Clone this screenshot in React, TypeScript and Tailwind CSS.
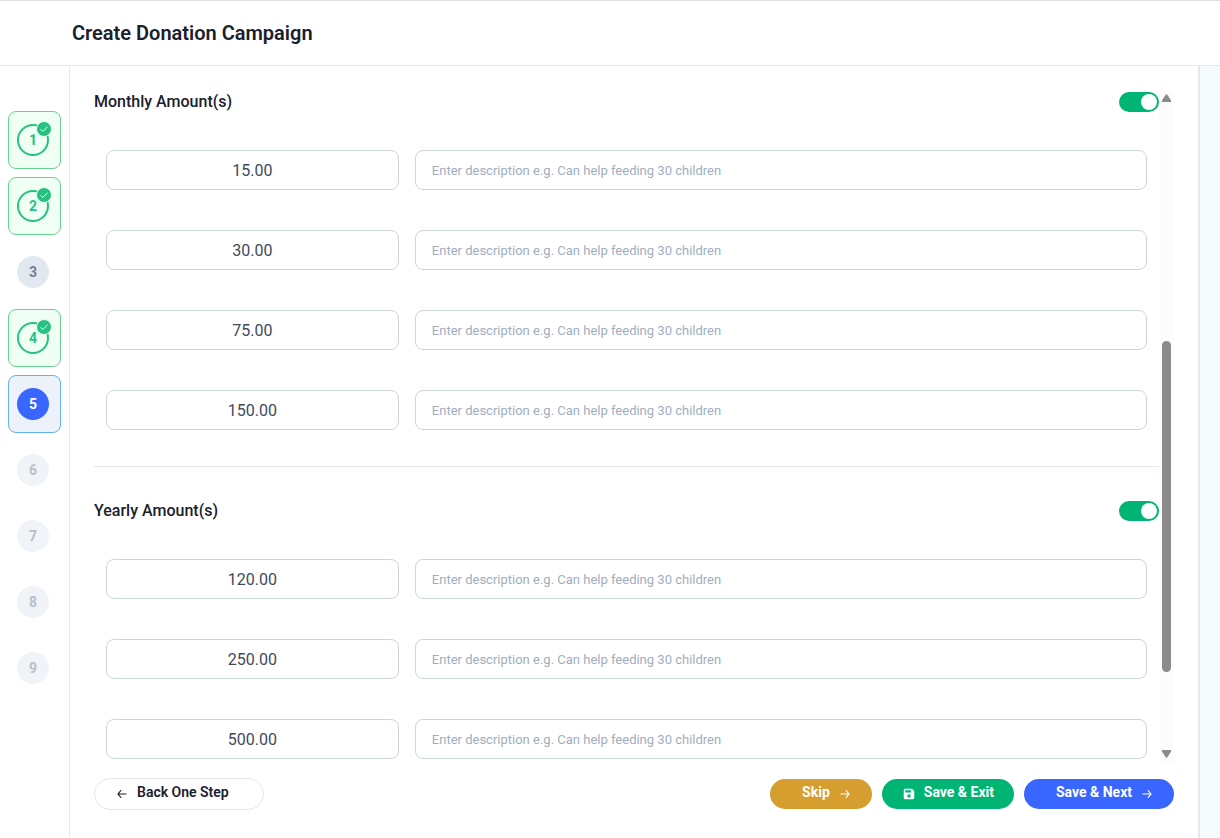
import { useState } from "react";
import type { ReactNode } from "react";
import clsx from "clsx";

type StepState = "done" | "current" | "open" | "disabled";

const steps: { id: number; state: StepState }[] = [
  { id: 1, state: "done" },
  { id: 2, state: "done" },
  { id: 3, state: "open" },
  { id: 4, state: "done" },
  { id: 5, state: "current" },
  { id: 6, state: "disabled" },
  { id: 7, state: "disabled" },
  { id: 8, state: "disabled" },
  { id: 9, state: "disabled" },
];

const monthlyAmounts = ["15.00", "30.00", "75.00", "150.00"];
const yearlyAmounts = ["120.00", "250.00", "500.00"];

function ArrowIcon({ className }: { className?: string }) {
  return (
    <svg viewBox="0 0 24 24" fill="currentColor" className={clsx("size-3.5", className)} aria-hidden="true">
      <path d="M5 13h11.86l-3.63 4.36a1 1 0 0 0 1.54 1.28l5-6a1.19 1.19 0 0 0 .09-.15c0-.05.05-.08.07-.13A1 1 0 0 0 20 12a1 1 0 0 0-.07-.36c0-.05-.05-.08-.07-.13a1.19 1.19 0 0 0-.09-.15l-5-6A1 1 0 0 0 14 5a1 1 0 0 0-.64.23 1 1 0 0 0-.13 1.41L16.86 11H5a1 1 0 0 0 0 2z" />
    </svg>
  );
}

function SaveIcon() {
  return (
    <svg viewBox="0 0 24 24" fill="currentColor" className="size-3.5" aria-hidden="true">
      <path
        fillRule="evenodd"
        d="M5.5 3h10.700a2 2 0 0 1 1.400.6l2.800 2.800a2 2 0 0 1 .6 1.400v10.700a2.500 2.500 0 0 1-2.500 2.500h-13a2.500 2.500 0 0 1-2.500-2.500v-13a2.500 2.500 0 0 1 2.500-2.500zM5.500 5.500v4h10v-4zM12 12.500a3 3 0 1 0 0 6 3 3 0 0 0 0-6z"
      />
    </svg>
  );
}

function Step({ id, state }: { id: number; state: StepState }) {
  return (
    <li>
      <button
        type="button"
        disabled={state === "disabled"}
        aria-current={state === "current" ? "step" : undefined}
        className={clsx(
          "flex w-full rounded-lg border py-3 pl-2",
          state === "done" && "border-[#68d391] bg-[#f0fff4]",
          state === "current" && "border-[#63b3ed] bg-[#edf2fa]",
          (state === "open" || state === "disabled") && "border-transparent"
        )}
      >
        <span
          className={clsx(
            "relative flex size-8 items-center justify-center rounded-full text-sm font-bold",
            state === "done" && "border-2 border-[#27c281] text-[#27c281]",
            state === "current" && "bg-[#3866ff] text-white",
            state === "open" && "bg-[#e2e8f0] text-[#718096]",
            state === "disabled" && "bg-[#f0f3f8] text-[#b8c0cc]"
          )}
        >
          {id}
          {state === "done" && (
            <span className="absolute -top-[5px] -right-[5px] flex size-4 items-center justify-center rounded-full border border-[#f0fff4] bg-[#27c281]">
              <svg viewBox="0 0 14 14" className="size-full" fill="none" aria-hidden="true">
                <path d="M3.800 7.600l2 1.900 4.400-4.500" stroke="white" strokeWidth="1" strokeLinecap="round" strokeLinejoin="round" />
              </svg>
            </span>
          )}
        </span>
      </button>
    </li>
  );
}

function Toggle({ label }: { label: string }) {
  const [on, setOn] = useState(true);

  return (
    <label className="relative mt-0.5 flex">
      <input
        type="checkbox"
        role="switch"
        aria-label={label}
        checked={on}
        onChange={() => setOn(!on)}
        className="peer h-5 w-10 cursor-pointer appearance-none rounded-full bg-[#cbd5e0] checked:bg-[#00b574]"
      />
      <span className="pointer-events-none absolute top-0.5 left-0.5 size-4 rounded-full bg-white transition-transform peer-checked:translate-x-5" />
    </label>
  );
}

function AmountSection({ title, amounts }: { title: string; amounts: string[] }) {
  return (
    <section>
      <div className="flex h-6 items-start justify-between">
        <h2 className="text-base leading-6 font-medium text-[#1a202c]">{title}</h2>
        <Toggle label={title} />
      </div>

      <div className="flex flex-col gap-10 px-3 py-9">
        {amounts.map((amount) => (
          <div key={amount} className="grid grid-cols-[2fr_5fr] gap-4">
            <input
              type="text"
              aria-label={`${title} ${amount}`}
              defaultValue={amount}
              className="h-10 w-full min-w-0 rounded-lg border border-[#cbd5e0] bg-white px-4 text-center text-base text-[#3f4a5c]"
            />
            <input
              type="text"
              aria-label={`Description for ${amount}`}
              placeholder="Enter description e.g. Can help feeding 30 children"
              className="h-10 w-full min-w-0 rounded-lg border border-[#cbd5e0] bg-white px-4 text-[13px] placeholder:text-[#a0aec0]"
            />
          </div>
        ))}
      </div>
    </section>
  );
}

function PillButton({ className, children }: { className?: string; children: ReactNode }) {
  return (
    <button
      type="button"
      className={clsx("flex items-center gap-2 rounded-full text-sm", className)}
    >
      {children}
    </button>
  );
}

export default function App() {
  return (
    <div className="flex h-screen flex-col bg-white font-[Roboto,sans-serif] text-[#1a202c]">
      <header className="shrink-0 border-t border-b border-t-[#e0e0e0] border-b-[#e2e8f0] px-[72px] py-[18px]">
        <h1 className="text-xl leading-7 font-semibold">Create Donation Campaign</h1>
      </header>

      <div className="flex min-h-0 flex-1">
        <nav aria-label="Steps" className="w-[70px] shrink-0 border-r border-[#e2e8f0] px-2 pt-[45px]">
          <ol className="flex flex-col gap-2">
            {steps.map((step) => (
              <Step key={step.id} id={step.id} state={step.state} />
            ))}
          </ol>
        </nav>

        <main className="flex min-w-0 flex-1 flex-col border-r-2 border-[#e2e8f0] px-6 pt-6">
          <div className="flex min-h-0 flex-1">
            <div className="min-w-0 flex-1 overflow-hidden">
              <AmountSection title="Monthly Amount(s)" amounts={monthlyAmounts} />
              <hr className="mb-8 border-[#e2e8f0]" />
              <AmountSection title="Yearly Amount(s)" amounts={yearlyAmounts} />
            </div>

            {/* Scrollbar */}
            <div aria-hidden="true" className="flex w-[15px] shrink-0 flex-col items-center bg-[#fcfcfc] py-1">
              <svg viewBox="0 0 9 8" className="h-2 w-[9px]" fill="#8b8b8b">
                <path d="M3.700.8a1 1 0 0 1 1.600 0L8.800 6a1 1 0 0 1-.8 2H1A1 1 0 0 1 .2 6z" />
              </svg>
              <div className="flex w-full flex-1 flex-col items-center py-1">
                <div className="flex-[235]" />
                <div className="w-[9px] flex-[331] rounded-full bg-[#8b8b8b]" />
                <div className="flex-[74]" />
              </div>
              <svg viewBox="0 0 9 8" className="h-2 w-[9px]" fill="#8b8b8b">
                <path d="M3.700 7.200a1 1 0 0 0 1.600 0L8.800 2A1 1 0 0 0 8 0H1A1 1 0 0 0 .2 2z" />
              </svg>
            </div>
          </div>

          <footer className="flex shrink-0 items-center justify-between pt-4 pb-7">
            <PillButton className="h-8 border border-[#e2e8f0] bg-white pr-[34px] pl-5 font-semibold">
              <ArrowIcon className="rotate-180" />
              <span className="pb-1">Back One Step</span>
            </PillButton>

            <div className="flex gap-2.5">
              <PillButton className="h-[30px] bg-[#d69e2e] pr-5 pl-8 font-bold text-white">
                <span className="pb-1">Skip</span>
                <ArrowIcon />
              </PillButton>
              <PillButton className="h-[30px] bg-[#00b574] px-5 font-bold text-white">
                <SaveIcon />
                <span className="pb-1">Save &amp; Exit</span>
              </PillButton>
              <PillButton className="h-[30px] bg-[#3866ff] pr-5 pl-8 font-bold text-white">
                <span className="pb-1">Save &amp; Next</span>
                <ArrowIcon />
              </PillButton>
            </div>
          </footer>
        </main>

        <div className="w-5 shrink-0 bg-[#f5fafd]" />
      </div>
    </div>
  );
}
